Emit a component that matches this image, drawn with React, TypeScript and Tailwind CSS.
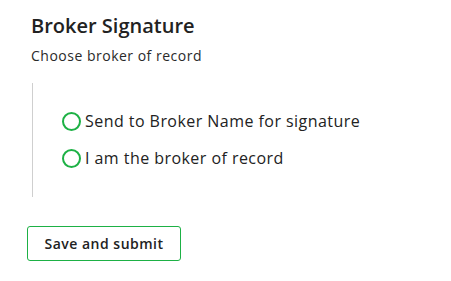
import React from 'react';

const options = ['Send to Broker Name for signature', 'I am the broker of record'];

export default function App() {
  return (
    <div className="min-h-screen bg-white pl-[31px] pt-[13px] text-[#222]" style={{ fontFamily: '"Open Sans", Lato, sans-serif' }}>
      <h2 className="text-[20px] font-semibold leading-[26px]">Broker Signature</h2>
      <p className="mt-[8px] text-[14px] leading-[18px] tracking-[0.5px] text-[#2a2a2a]">Choose broker of record</p>

      {/* Options panel with left rule */}
      <div className="mt-[18px] ml-[1px] h-[114px] border-l border-[#cfcfcf] pl-[29px] pt-[28px]">
        <div className="flex flex-col gap-[16px]">
          {options.map((label) => (
            <label key={label} className="flex items-center gap-[4px] text-[16px] leading-[21px] tracking-[0.45px] text-[#222]">
              <span className="h-[19px] w-[19px] shrink-0 rounded-full border-2 border-[#1db145]"></span>
              {label}
            </label>
          ))}
        </div>
      </div>

      <button className="mt-[29px] -ml-[4px] h-[35px] w-[154px] rounded-[3px] border border-[#1db145] text-[14px] font-semibold tracking-[0.5px] text-[#222]">
        Save and submit
      </button>
    </div>
  );
}
